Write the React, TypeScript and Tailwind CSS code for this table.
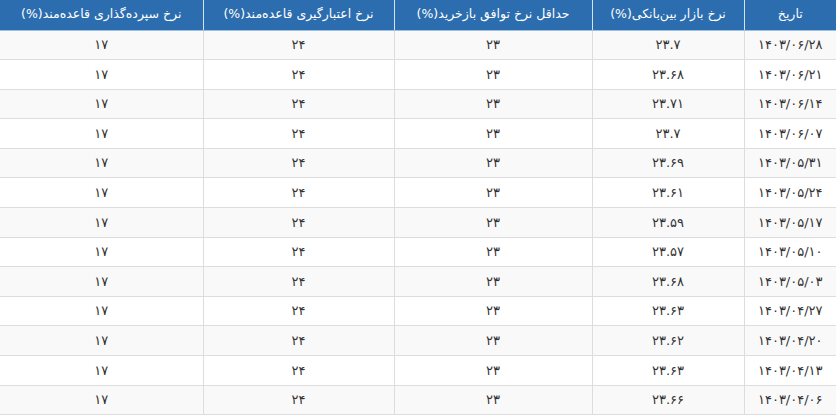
const headers = [
  'تاریخ',
  'نرخ بازار بین‌بانکی(%)',
  'حداقل نرخ توافق بازخرید(%)',
  'نرخ اعتبارگیری قاعده‌مند(%)',
  'نرخ سپرده‌گذاری قاعده‌مند(%)',
];

const rows: [string, string][] = [
  ['۱۴۰۳/۰۶/۲۸', '۲۳.۷'],
  ['۱۴۰۳/۰۶/۲۱', '۲۳.۶۸'],
  ['۱۴۰۳/۰۶/۱۴', '۲۳.۷۱'],
  ['۱۴۰۳/۰۶/۰۷', '۲۳.۷'],
  ['۱۴۰۳/۰۵/۳۱', '۲۳.۶۹'],
  ['۱۴۰۳/۰۵/۲۴', '۲۳.۶۱'],
  ['۱۴۰۳/۰۵/۱۷', '۲۳.۵۹'],
  ['۱۴۰۳/۰۵/۱۰', '۲۳.۵۷'],
  ['۱۴۰۳/۰۵/۰۳', '۲۳.۶۸'],
  ['۱۴۰۳/۰۴/۲۷', '۲۳.۶۳'],
  ['۱۴۰۳/۰۴/۲۰', '۲۳.۶۲'],
  ['۱۴۰۳/۰۴/۱۳', '۲۳.۶۳'],
  ['۱۴۰۳/۰۴/۰۶', '۲۳.۶۶'],
];

export default function App() {
  return (
    <div
      dir="rtl"
      className="h-[416px] w-[836px] overflow-hidden bg-white font-['DejaVu_Sans',sans-serif] text-[13px] text-[#333]"
    >
      <table className="w-full table-fixed border-collapse">
        <colgroup>
          <col className="w-[92px]" />
          <col className="w-[152px]" />
          <col className="w-[198px]" />
          <col className="w-[191px]" />
          <col className="w-[203px]" />
        </colgroup>
        <thead>
          <tr className="h-[30px] bg-[#2b6dae] text-[12.5px] text-white">
            {headers.map((h) => (
              <th
                key={h}
                className="border-b border-l border-b-[#9dbfe0] border-l-[#d5e3f1] px-2 text-center font-normal last:border-l-0"
              >
                {h}
              </th>
            ))}
          </tr>
        </thead>
        <tbody>
          {rows.map(([date, rate], i) => (
            <tr key={date} className={`h-[29.6px] ${i % 2 === 0 ? 'bg-[#f9f9f9]' : 'bg-white'}`}>
              {[date, rate, '۲۳', '۲۴', '۱۷'].map((v, j) => (
                <td
                  key={j}
                  className="border-b border-l border-[#dddddd] px-2 text-center last:border-l-0"
                >
                  {v}
                </td>
              ))}
            </tr>
          ))}
        </tbody>
      </table>
    </div>
  );
}
